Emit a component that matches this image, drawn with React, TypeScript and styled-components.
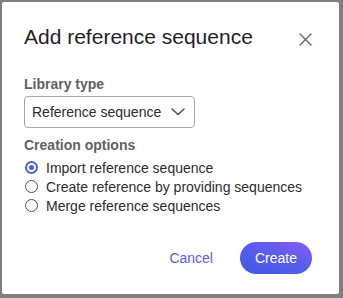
import React, { useState } from "react";
import styled, { createGlobalStyle } from "styled-components";

const Global = createGlobalStyle`
  html, body { margin: 0; padding: 0; }
  body {
    background: #808080;
    font-family: "Liberation Sans", Arial, sans-serif;
    width: 343px;
    height: 298px;
    overflow: hidden;
  }
`;

const Backdrop = styled.div`
  width: 343px;
  height: 298px;
  box-sizing: border-box;
  padding: 2px 4px 4px 2px;
  background: #808080;
`;

const Dialog = styled.div`
  width: 337px;
  height: 292px;
  box-sizing: border-box;
  background: #ffffff;
  border-radius: 2px;
  padding: 23px 27px 20px 22px;
  display: flex;
  flex-direction: column;
`;

const Header = styled.div`
  display: flex;
  align-items: center;
  justify-content: space-between;
`;

const Title = styled.h2`
  margin: 0;
  font-size: 21px;
  font-weight: 400;
  line-height: 24px;
  color: #1f2328;
`;

const CloseButton = styled.button`
  border: none;
  background: none;
  padding: 0;
  width: 14px;
  height: 14px;
  margin-top: 4px;
  display: flex;
  align-items: center;
  justify-content: center;
  cursor: pointer;
`;

const Body = styled.div`
  display: flex;
  flex-direction: column;
  margin-top: 27px;
`;

const Label = styled.div<{ $mt?: number }>`
  font-size: 14px;
  font-weight: 700;
  line-height: 16px;
  color: #5f6166;
  margin-top: ${(p) => p.$mt ?? 0}px;
`;

const SelectBox = styled.div`
  margin-top: 4px;
  width: 171px;
  height: 32px;
  box-sizing: border-box;
  border: 1px solid #a3a6ab;
  border-radius: 4px;
  display: flex;
  align-items: center;
  justify-content: space-between;
  padding: 0 9px 0 7px;
  font-size: 14px;
  color: #2a2d33;
`;

const RadioList = styled.div`
  display: flex;
  flex-direction: column;
  margin-top: 5px;
`;

const RadioRow = styled.label`
  display: flex;
  align-items: center;
  height: 19px;
  gap: 8px;
  font-size: 14px;
  color: #2a2d33;
  cursor: pointer;
`;

const RadioCircle = styled.span<{ $checked: boolean }>`
  width: 13px;
  height: 13px;
  box-sizing: border-box;
  border-radius: 50%;
  margin-left: 1px;
  border: ${(p) => (p.$checked ? "2px solid #4a5de6" : "1px solid #4b4e54")};
  display: flex;
  align-items: center;
  justify-content: center;
  &::after {
    content: "";
    width: 5px;
    height: 5px;
    border-radius: 50%;
    background: #4a5de6;
    display: ${(p) => (p.$checked ? "block" : "none")};
  }
`;

const Footer = styled.div`
  margin-top: auto;
  display: flex;
  justify-content: flex-end;
  align-items: center;
  gap: 12px;
`;

const TextButton = styled.button`
  border: none;
  background: none;
  font-family: inherit;
  font-size: 14px;
  color: #5460e4;
  height: 32px;
  padding: 0 15px;
  cursor: pointer;
`;

const PrimaryButton = styled.button`
  border: none;
  font-family: inherit;
  font-size: 14px;
  color: #ffffff;
  height: 32px;
  padding: 0 15px;
  border-radius: 16px;
  background: linear-gradient(20deg, #3a5ae6 0%, #5b5cf0 55%, #8a5cf4 100%);
  cursor: pointer;
`;

const options = [
  "Import reference sequence",
  "Create reference by providing sequences",
  "Merge reference sequences",
];

export default function App() {
  const [selected, setSelected] = useState(0);
  return (
    <>
      <Global />
      <Backdrop>
        <Dialog>
          <Header>
            <Title>Add reference sequence</Title>
            <CloseButton aria-label="Close">
              <svg width="13" height="13" viewBox="0 0 13 13">
                <path d="M1 1L12 12M12 1L1 12" stroke="#5a6578" strokeWidth="1.4" strokeLinecap="round" />
              </svg>
            </CloseButton>
          </Header>
          <Body>
            <Label>Library type</Label>
            <SelectBox>
              <span>Reference sequence</span>
              <svg width="14" height="8" viewBox="0 0 14 8">
                <path d="M1 1L7 6.5L13 1" stroke="#4a5060" strokeWidth="1.5" fill="none" strokeLinecap="round" strokeLinejoin="round" />
              </svg>
            </SelectBox>
            <Label $mt={9}>Creation options</Label>
            <RadioList>
              {options.map((o, i) => (
                <RadioRow key={o} onClick={() => setSelected(i)}>
                  <RadioCircle $checked={selected === i} />
                  {o}
                </RadioRow>
              ))}
            </RadioList>
          </Body>
          <Footer>
            <TextButton>Cancel</TextButton>
            <PrimaryButton>Create</PrimaryButton>
          </Footer>
        </Dialog>
      </Backdrop>
    </>
  );
}
